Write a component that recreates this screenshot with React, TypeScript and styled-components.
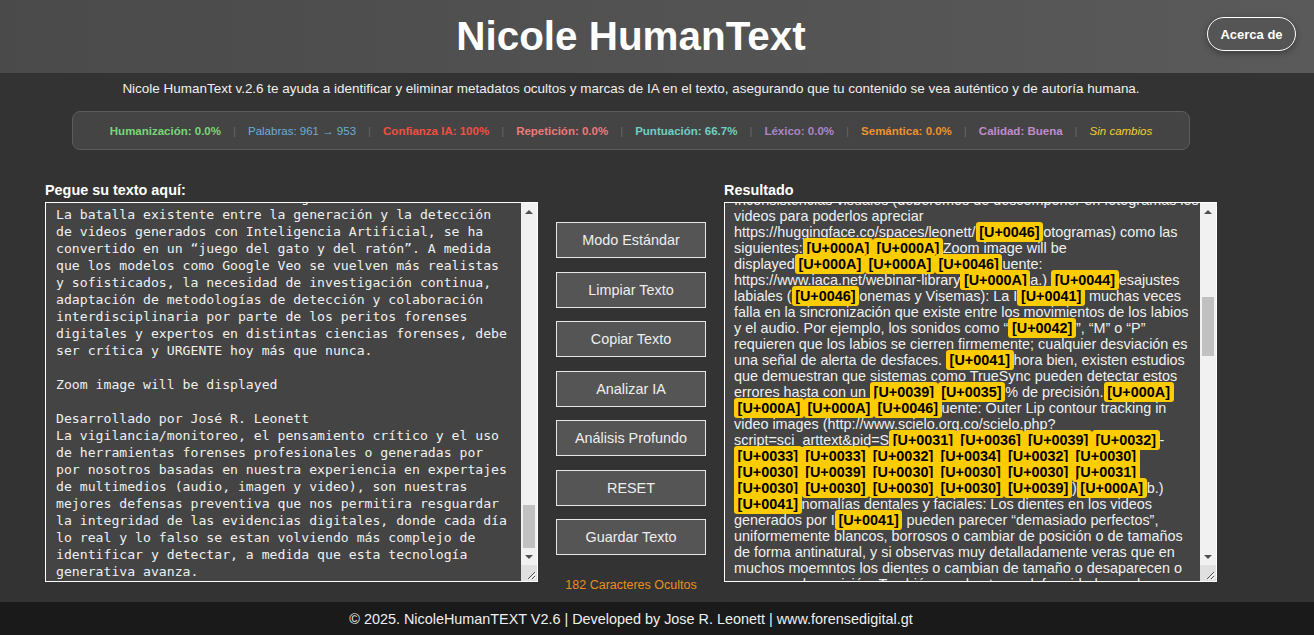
import { useEffect, useRef } from 'react'
import styled, { createGlobalStyle } from 'styled-components'

const STATS = [
  { label: 'Humanización: 0.0%', color: '#77d877', bold: true },
  { label: 'Palabras: 961 → 953', color: '#6aaed6' },
  { label: 'Confianza IA: 100%', color: '#ef5040', bold: true },
  { label: 'Repetición: 0.0%', color: '#ec7a7a', bold: true },
  { label: 'Puntuación: 66.7%', color: '#6fd0c0', bold: true },
  { label: 'Léxico: 0.0%', color: '#ab86c6', bold: true },
  { label: 'Semántica: 0.0%', color: '#ee922c', bold: true },
  { label: 'Calidad: Buena', color: '#c08ccc', bold: true },
  { label: 'Sin cambios', color: '#f1d02e', italic: true },
]

const ACTIONS = [
  'Modo Estándar',
  'Limpiar Texto',
  'Copiar Texto',
  'Analizar IA',
  'Análisis Profundo',
  'RESET',
  'Guardar Texto',
]

const SOURCE_TEXT = `                               g
La batalla existente entre la generación y la detección de videos generados con Inteligencia Artificial, se ha convertido en un “juego del gato y del ratón”. A medida que los modelos como Google Veo se vuelven más realistas y sofisticados, la necesidad de investigación continua, adaptación de metodologías de detección y colaboración interdisciplinaria por parte de los peritos forenses digitales y expertos en distintas ciencias forenses, debe ser crítica y URGENTE hoy más que nunca.

Zoom image will be displayed

Desarrollado por José R. Leonett
La vigilancia/monitoreo, el pensamiento crítico y el uso de herramientas forenses profesionales o generadas por por nosotros basadas en nuestra experiencia en expertajes de multimedios (audio, imagen y video), son nuestras mejores defensas preventiva que nos permitira resguardar la integridad de las evidencias digitales, donde cada día lo real y lo falso se estan volviendo más complejo de identificar y detectar, a medida que esta tecnología generativa avanza.`

const RESULT_LINES = [
  'Inconsistencias visuales (deberemos de descomponer en fotogramas los',
  'videos para poderlos apreciar',
  'https://huggingface.co/spaces/leonett/[U+0046]otogramas) como las',
  'siguientes:[U+000A][U+000A]Zoom image will be',
  'displayed[U+000A][U+000A][U+0046]uente:',
  'https://www.iaca.net/webinar-library[U+000A]a.) [U+0044]esajustes',
  'labiales ([U+0046]onemas y Visemas): La I[U+0041] muchas veces',
  'falla en la sincronización que existe entre los movimientos de los labios',
  'y el audio. Por ejemplo, los sonidos como “[U+0042]”, “M” o “P”',
  'requieren que los labios se cierren firmemente; cualquier desviación es',
  'una señal de alerta de desfaces. [U+0041]hora bien, existen estudios',
  'que demuestran que sistemas como TrueSync pueden detectar estos',
  'errores hasta con un [U+0039][U+0035]% de precisión.[U+000A]',
  '[U+000A][U+000A][U+0046]uente: Outer Lip contour tracking in',
  'video images (http://www.scielo.org.co/scielo.php?',
  'script=sci_arttext&pid=S[U+0031][U+0036][U+0039][U+0032]-',
  '[U+0033][U+0033][U+0032][U+0034][U+0032][U+0030]',
  '[U+0030][U+0039][U+0030][U+0030][U+0030][U+0031]',
  '[U+0030][U+0030][U+0030][U+0030][U+0039])[U+000A]b.)',
  '[U+0041]nomalías dentales y faciales: Los dientes en los videos',
  'generados por I[U+0041] pueden parecer “demasiado perfectos”,',
  'uniformemente blancos, borrosos o cambiar de posición o de tamaños',
  'de forma antinatural, y si observas muy detalladamente veras que en',
  'muchos moemntos los dientes o cambian de tamaño o desaparecen o',
  'aparecen de posición. También pueden tener deformidades en los',
]

const LEADING_LINES = 140

function ResultLine({ text }: { text: string }) {
  const parts = text.split(/(\[U\+[0-9A-F]{4}\])/).filter(Boolean)
  return (
    <Line>
      {parts.map((part, i) =>
        part.startsWith('[U+') ? <Mark key={i}>{part}</Mark> : <span key={i}>{part}</span>
      )}
    </Line>
  )
}

function ScrollRail({ thumbTop, thumbHeight }: { thumbTop: number; thumbHeight: number }) {
  return (
    <Rail>
      <ArrowCell>
        <UpArrow />
      </ArrowCell>
      <Track>
        <Thumb $top={thumbTop} $height={thumbHeight} />
      </Track>
      <ArrowCell>
        <DownArrow />
      </ArrowCell>
      <ResizeCorner>
        <svg width="16" height="16" viewBox="0 0 16 16">
          <path d="M14 7 L7 14 M14 11 L11 14" stroke="#555555" strokeWidth="1" />
          <path d="M15 8 L8 15 M15 12 L12 15" stroke="#ffffff" strokeWidth="1" />
        </svg>
      </ResizeCorner>
    </Rail>
  )
}

export default function App() {
  const sourceRef = useRef<HTMLTextAreaElement>(null)
  const resultRef = useRef<HTMLDivElement>(null)

  useEffect(() => {
    if (sourceRef.current) sourceRef.current.scrollTop = 24 + LEADING_LINES * 17
    if (resultRef.current) resultRef.current.scrollTop = 490
  }, [])

  return (
    <Page>
      <GlobalStyle />
      <Header>
        <Title>Nicole HumanText</Title>
        <AboutButton>Acerca de</AboutButton>
      </Header>

      <Main>
        <Intro>
          Nicole HumanText v.2.6 te ayuda a identificar y eliminar metadatos ocultos y marcas de IA
          en el texto, asegurando que tu contenido se vea auténtico y de autoría humana.
        </Intro>

        <StatsBar>
          {STATS.map((stat, i) => (
            <StatGroup key={stat.label}>
              {i > 0 && <StatDivider>|</StatDivider>}
              <Stat $color={stat.color} $bold={stat.bold} $italic={stat.italic}>
                {stat.label}
              </Stat>
            </StatGroup>
          ))}
        </StatsBar>

        <Workspace>
          <Column>
            <PanelLabel>Pegue su texto aquí:</PanelLabel>
            <Frame>
              <SourceBox
                ref={sourceRef}
                readOnly
                spellCheck={false}
                value={'\n'.repeat(LEADING_LINES) + SOURCE_TEXT}
              />
              <ScrollRail thumbTop={285} thumbHeight={43} />
            </Frame>
          </Column>

          <Actions>
            {ACTIONS.map((action) => (
              <ActionButton key={action}>{action}</ActionButton>
            ))}
            <HiddenCount>182 Caracteres Ocultos</HiddenCount>
          </Actions>

          <Column>
            <PanelLabel>Resultado</PanelLabel>
            <Frame>
              <ResultBox ref={resultRef}>
                <ScrollSpacer $height={469} />
                {RESULT_LINES.map((line, i) => (
                  <ResultLine key={i} text={line} />
                ))}
                <ScrollSpacer $height={1180} />
              </ResultBox>
              <ScrollRail thumbTop={77} thumbHeight={59} />
            </Frame>
          </Column>
        </Workspace>
      </Main>

      <Footer>© 2025. NicoleHumanTEXT V2.6 | Developed by Jose R. Leonett | www.forensedigital.gt</Footer>
    </Page>
  )
}

const GlobalStyle = createGlobalStyle`
  html, body {
    margin: 0;
    padding: 0;
    background: #333333;
  }

  body {
    font-family: "Liberation Sans", Arial, sans-serif;
    overflow: hidden;
  }
`

const Page = styled.div`
  width: 1314px;
  height: 635px;
  display: flex;
  flex-direction: column;
  background: #333333;
  color: #f0f0f0;
`

const Header = styled.header`
  position: relative;
  flex: none;
  height: 73px;
  display: flex;
  align-items: center;
  padding-right: 52px;
  background: linear-gradient(90deg, #4a4a4a, #5a5a5a);
`

const Title = styled.h1`
  flex: 1;
  margin: 0;
  text-align: center;
  font-size: 40.4px;
  font-weight: 700;
  color: #ffffff;
`

const AboutButton = styled.button`
  position: absolute;
  top: 17px;
  right: 18px;
  width: 89px;
  height: 34px;
  padding: 0;
  border: 1px solid #ffffff;
  border-radius: 17px;
  background: #555555;
  box-shadow: 0 2px 6px rgba(0, 0, 0, 0.35);
  color: #ffffff;
  font-family: inherit;
  font-size: 13px;
  font-weight: 700;
`

const Main = styled.main`
  flex: 1;
  width: 1172px;
  margin-left: 45px;
  display: flex;
  flex-direction: column;
`

const Intro = styled.p`
  margin: 8px 0 14px;
  text-align: center;
  font-size: 13.48px;
  line-height: 16px;
  color: #f0f0f0;
`

const StatsBar = styled.div`
  height: 39px;
  margin: 0 27px;
  display: flex;
  align-items: center;
  justify-content: center;
  box-sizing: border-box;
  border: 1px solid #5c5c5c;
  border-radius: 8px;
  background: #444444;
  font-size: 11.5px;
`

const StatGroup = styled.div`
  display: flex;
  align-items: center;
`

const StatDivider = styled.span`
  margin: 0 12px;
  color: #666666;
`

const Stat = styled.span<{ $color: string; $bold?: boolean; $italic?: boolean }>`
  color: ${({ $color }) => $color};
  font-weight: ${({ $bold }) => ($bold ? 700 : 400)};
  font-style: ${({ $italic }) => ($italic ? 'italic' : 'normal')};
`

const Workspace = styled.div`
  margin-top: 32px;
  display: flex;
  gap: 18px;
`

const Column = styled.section`
  width: 493px;
  display: flex;
  flex-direction: column;
`

const PanelLabel = styled.label`
  height: 16px;
  margin-bottom: 4px;
  font-size: 14.4px;
  line-height: 16px;
  font-weight: 700;
  color: #ffffff;
`

const Frame = styled.div`
  position: relative;
  width: 493px;
  height: 380px;
`

const SourceBox = styled.textarea`
  display: block;
  width: 100%;
  height: 100%;
  box-sizing: border-box;
  margin: 0;
  padding: 10px 27px 10px 10px;
  border: 1px solid #ffffff;
  border-radius: 0;
  outline: none;
  background: #444444;
  color: #f0f0f0;
  font-family: "DejaVu Sans Mono", "Liberation Mono", monospace;
  font-size: 13.15px;
  line-height: 17px;
  white-space: pre-wrap;
  resize: none;
  overflow: hidden;
`

const ResultBox = styled.div`
  width: 100%;
  height: 100%;
  box-sizing: border-box;
  padding: 10px 28px 10px 9px;
  border: 1px solid #ffffff;
  background: #444444;
  color: #f0f0f0;
  font-size: 14.4px;
  line-height: 16px;
  overflow: hidden;
`

const ScrollSpacer = styled.div<{ $height: number }>`
  height: ${({ $height }) => $height}px;
`

const Line = styled.div`
  white-space: pre;
`

const Mark = styled.span`
  padding: 2px 3.6px;
  border-radius: 3px;
  background: #ffcc00;
  color: #000000;
  font-weight: 700;
`

const Rail = styled.div`
  position: absolute;
  top: 1px;
  right: 1px;
  bottom: 1px;
  width: 16px;
  display: flex;
  flex-direction: column;
  background: #f1f1f1;
`

const ArrowCell = styled.div`
  flex: none;
  height: 17px;
  display: flex;
  align-items: center;
  justify-content: center;
`

const UpArrow = styled.div`
  width: 0;
  height: 0;
  border-left: 4px solid transparent;
  border-right: 4px solid transparent;
  border-bottom: 4px solid #505050;
`

const DownArrow = styled.div`
  width: 0;
  height: 0;
  border-left: 4px solid transparent;
  border-right: 4px solid transparent;
  border-top: 4px solid #505050;
`

const Track = styled.div`
  position: relative;
  flex: 1;
`

const Thumb = styled.div<{ $top: number; $height: number }>`
  position: absolute;
  left: 2px;
  right: 2px;
  top: ${({ $top }) => $top}px;
  height: ${({ $height }) => $height}px;
  background: #c1c1c1;
`

const ResizeCorner = styled.div`
  flex: none;
  height: 16px;
  display: flex;
  background: #e0e0e0;
`

const Actions = styled.div`
  width: 150px;
  padding-top: 40px;
  display: flex;
  flex-direction: column;
  gap: 13.5px;
`

const ActionButton = styled.button`
  width: 150px;
  height: 36px;
  padding: 0;
  border: 1px solid #e6e6e6;
  border-radius: 0;
  background: #555555;
  color: #eeeeee;
  font-family: inherit;
  font-size: 14.4px;
`

const HiddenCount = styled.div`
  margin-top: 9px;
  text-align: center;
  font-size: 12.5px;
  line-height: 14px;
  color: #e8901e;
`

const Footer = styled.footer`
  flex: none;
  height: 33px;
  display: flex;
  align-items: center;
  justify-content: center;
  padding-right: 52px;
  background: #1a1a1a;
  color: #f0f0f0;
  font-size: 14.4px;
`
